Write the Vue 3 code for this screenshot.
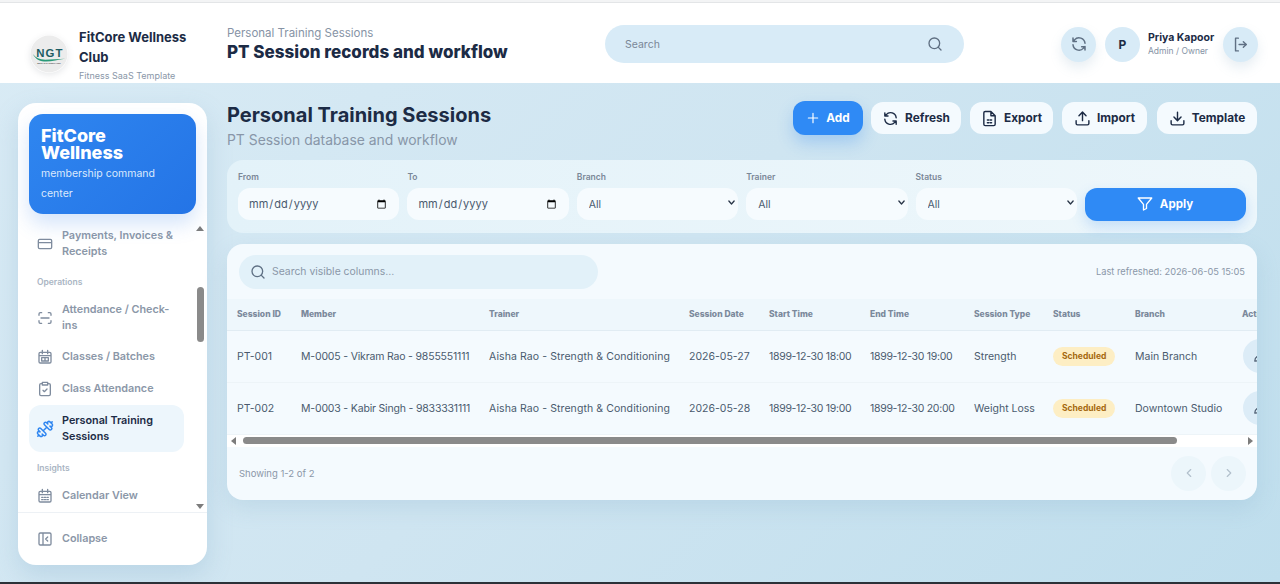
<template>
  <div class="page">
    <div class="top-strip"></div>

    <header class="topbar">
      <div class="org">
        <div class="logo">
          <svg viewBox="0 0 40 40" width="38" height="38">
            <circle cx="20" cy="20" r="19.5" fill="#ececec" />
            <text x="21" y="23" text-anchor="middle" class="logo-text">NGT</text>
            <path d="M3 20c3 4 7 6 13 6s14-1 21-1c-7 1-14 3-20 3S6 26 3 20z" fill="#2a9a78" />
            <text x="20" y="30.500" text-anchor="middle" class="logo-small">BEST SAS TEMPLATES</text>
          </svg>
        </div>
        <div class="org-text">
          <div class="org-name">FitCore Wellness Club</div>
          <div class="org-sub">Fitness SaaS Template</div>
        </div>
      </div>

      <div class="crumb">
        <div class="crumb-sub">Personal Training Sessions</div>
        <div class="crumb-title">PT Session records and workflow</div>
      </div>

      <div class="top-search">
        <span>Search</span>
        <svg class="ico" width="16" height="16" viewBox="0 0 24 24"><circle cx="11" cy="11" r="8" /><path d="m21 21-4.300-4.300" /></svg>
      </div>

      <div class="top-right">
        <button class="round-btn">
          <svg class="ico" width="18" height="18" viewBox="0 0 24 24"><path :d="icons.refresh" /></svg>
        </button>
        <div class="avatar">P</div>
        <div class="user">
          <div class="user-name">Priya Kapoor</div>
          <div class="user-role">Admin / Owner</div>
        </div>
        <button class="round-btn">
          <svg class="ico" width="17" height="17" viewBox="0 0 24 24"><path d="M9 21H5V3h4" /><path d="m16 16 4-4-4-4" /><path d="M20 12H10" /></svg>
        </button>
      </div>
    </header>

    <div class="body">
      <aside class="sidebar">
        <div class="brand">
          <div class="brand-name">FitCore Wellness</div>
          <div class="brand-sub">membership command center</div>
        </div>

        <div class="nav-wrap">
          <nav class="nav">
            <template v-for="item in navItems" :key="item.label">
              <div v-if="item.section" class="nav-section">{{ item.label }}</div>
              <a v-else class="nav-item" :class="{ active: item.active }">
                <svg class="ico nav-ico" :class="{ flip: item.active }" :width="item.active ? 18 : 16" :height="item.active ? 18 : 16" viewBox="0 0 24 24"><path :d="item.icon" /></svg>
                <span>{{ item.label }}</span>
              </a>
            </template>
          </nav>
          <div class="vscroll">
            <i class="arrow up"></i>
            <div class="vtrack"><div class="vthumb"></div></div>
            <i class="arrow down"></i>
          </div>
        </div>

        <div class="collapse">
          <svg class="ico nav-ico" width="16" height="16" viewBox="0 0 24 24"><path :d="icons.collapse" /></svg>
          <span>Collapse</span>
        </div>
      </aside>

      <main class="main">
        <div class="head">
          <div>
            <h1>Personal Training Sessions</h1>
            <p>PT Session database and workflow</p>
          </div>
          <div class="actions">
            <button class="btn primary">
              <svg class="ico" width="14" height="14" viewBox="0 0 24 24"><path d="M12 4v16M4 12h16" /></svg>
              Add
            </button>
            <button v-for="b in toolButtons" :key="b.label" class="btn" :style="{ width: b.width + 'px' }">
              <svg class="ico" width="17" height="17" viewBox="0 0 24 24"><path :d="b.icon" /></svg>
              {{ b.label }}
            </button>
          </div>
        </div>

        <section class="filters">
          <label class="field">
            <span>From</span>
            <input type="date" />
          </label>
          <label class="field">
            <span>To</span>
            <input type="date" />
          </label>
          <label v-for="f in selectFilters" :key="f" class="field sel">
            <span>{{ f }}</span>
            <select><option>All</option></select>
            <svg class="ico chev" width="9" height="9" viewBox="0 0 24 24"><path d="m5 8 7 8 7-8" /></svg>
          </label>
          <button class="apply">
            <svg class="ico funnel" width="18" height="18" viewBox="0 0 24 24"><path d="M21 4H3l7 8.500V20l4-2v-5.500z" /></svg>
            Apply
          </button>
        </section>

        <section class="table-card">
          <div class="table-top">
            <div class="table-search">
              <svg class="ico" width="16" height="16" viewBox="0 0 24 24"><circle cx="11" cy="11" r="8" /><path d="m21 21-4.300-4.300" /></svg>
              <span>Search visible columns...</span>
            </div>
            <div class="refreshed">Last refreshed: 2026-06-05 15:05</div>
          </div>

          <div class="table-wrap">
            <table>
              <colgroup>
                <col v-for="w in colWidths" :key="w.name" :style="{ width: w.px + 'px' }" />
              </colgroup>
              <thead>
                <tr><th v-for="w in colWidths" :key="w.name">{{ w.name }}</th></tr>
              </thead>
              <tbody>
                <tr v-for="r in rows" :key="r.id">
                  <td>{{ r.id }}</td>
                  <td class="tight">{{ r.member }}</td>
                  <td class="loose">{{ r.trainer }}</td>
                  <td>{{ r.date }}</td>
                  <td class="tighter">{{ r.start }}</td>
                  <td class="tighter">{{ r.end }}</td>
                  <td>{{ r.type }}</td>
                  <td><span class="pill">Scheduled</span></td>
                  <td>{{ r.branch }}</td>
                  <td>
                    <button class="row-btn">
                      <svg class="ico" width="14" height="14" viewBox="0 0 24 24"><path d="M17 3l4 4L8 20l-5 1 1-5z" /></svg>
                    </button>
                  </td>
                </tr>
              </tbody>
            </table>
          </div>

          <div class="hscroll">
            <i class="arrow left"></i>
            <div class="htrack"><div class="hthumb"></div></div>
            <i class="arrow right"></i>
          </div>

          <div class="table-foot">
            <span>Showing 1-2 of 2</span>
            <div class="pager">
              <button><svg class="ico" width="14" height="14" viewBox="0 0 24 24"><path d="m15 18-6-6 6-6" /></svg></button>
              <button><svg class="ico" width="14" height="14" viewBox="0 0 24 24"><path d="m9 18 6-6-6-6" /></svg></button>
            </div>
          </div>
        </section>
      </main>
    </div>
    <div class="bottom-strip"></div>
  </div>
</template>

<script setup>
const icons = {
  refresh: 'M20 11a8 8 0 0 0-14-4.500L4 8.500M4 4v4.500h4.500M4 13a8 8 0 0 0 14 4.500l2-2M20 20v-4.500h-4.500',
  collapse: 'M5 3h14a2 2 0 0 1 2 2v14a2 2 0 0 1-2 2H5a2 2 0 0 1-2-2V5a2 2 0 0 1 2-2zM9 3v18M16 9l-3 3 3 3',
}

const calendar = 'M5 5h14a2 2 0 0 1 2 2v12a2 2 0 0 1-2 2H5a2 2 0 0 1-2-2V7a2 2 0 0 1 2-2zM8 2v5M16 2v5M3 10h18'

const dumbbell = 'M14.400 14.400 9.600 9.600M18.657 21.485a2 2 0 1 1-2.829-2.828l-1.767 1.768a2 2 0 1 1-2.829-2.829l6.364-6.364a2 2 0 1 1 2.829 2.829l-1.768 1.767a2 2 0 1 1 2.828 2.829zM21.500 21.500l-1.400-1.400M3.900 3.900 2.500 2.500M6.404 12.768a2 2 0 1 1-2.829-2.829l1.768-1.767a2 2 0 1 1-2.828-2.829l2.828-2.828a2 2 0 1 1 2.829 2.828l1.767-1.768a2 2 0 1 1 2.829 2.829z'

const navItems = [
  { label: 'Payments, Invoices & Receipts', icon: 'M4 5h16a2 2 0 0 1 2 2v10a2 2 0 0 1-2 2H4a2 2 0 0 1-2-2V7a2 2 0 0 1 2-2zM2 10h20' },
  { label: 'Operations', section: true },
  { label: 'Attendance / Check-ins', icon: 'M3 8V6a2 2 0 0 1 2-2h2M17 4h2a2 2 0 0 1 2 2v2M21 16v2a2 2 0 0 1-2 2h-2M7 20H5a2 2 0 0 1-2-2v-2M6 12h12' },
  { label: 'Classes / Batches', icon: calendar + 'M7 13h10v5H7zM12 13v5' },
  { label: 'Class Attendance', icon: 'M8 4H6a2 2 0 0 0-2 2v14a2 2 0 0 0 2 2h12a2 2 0 0 0 2-2V6a2 2 0 0 0-2-2h-2M8 2h8v4H8zM9 14l2 2 4-4' },
  { label: 'Personal Training Sessions', active: true, icon: dumbbell },
  { label: 'Insights', section: true },
  { label: 'Calendar View', icon: calendar + 'M7 14h2M11 14h2M15 14h2M7 17.500h2M11 17.500h2M15 17.500h2' },
]

const toolButtons = [
  { label: 'Refresh', width: 90, icon: icons.refresh },
  { label: 'Export', width: 83, icon: 'M14 2H6a2 2 0 0 0-2 2v16a2 2 0 0 0 2 2h12a2 2 0 0 0 2-2V8zM14 2v6h6M9 14h2M13 14h2M9 18h2M13 18h2' },
  { label: 'Import', width: 85, icon: 'M3 15v4a2 2 0 0 0 2 2h14a2 2 0 0 0 2-2v-4M17 8l-5-5-5 5M12 3v12' },
  { label: 'Template', width: 100, icon: 'M3 15v4a2 2 0 0 0 2 2h14a2 2 0 0 0 2-2v-4M7 10l5 5 5-5M12 15V3' },
]

const selectFilters = ['Branch', 'Trainer', 'Status']

const colWidths = [
  { name: 'Session ID', px: 64 },
  { name: 'Member', px: 188 },
  { name: 'Trainer', px: 200 },
  { name: 'Session Date', px: 80 },
  { name: 'Start Time', px: 101 },
  { name: 'End Time', px: 104 },
  { name: 'Session Type', px: 79 },
  { name: 'Status', px: 82 },
  { name: 'Branch', px: 107 },
  { name: 'Actions', px: 70 },
]

const rows = [
  { id: 'PT-001', member: 'M-0005 - Vikram Rao - 9855551111', trainer: 'Aisha Rao - Strength & Conditioning', date: '2026-05-27', start: '1899-12-30 18:00', end: '1899-12-30 19:00', type: 'Strength', branch: 'Main Branch' },
  { id: 'PT-002', member: 'M-0003 - Kabir Singh - 9833331111', trainer: 'Aisha Rao - Strength & Conditioning', date: '2026-05-28', start: '1899-12-30 19:00', end: '1899-12-30 20:00', type: 'Weight Loss', branch: 'Downtown Studio' },
]
</script>

<style>
html, body { margin: 0; padding: 0; }
</style>

<style scoped>
.page {
  width: 1280px;
  height: 584px;
  overflow: hidden;
  display: flex;
  flex-direction: column;
  font-family: Inter, "Liberation Sans", sans-serif;
  color: #1c2b45;
  background: linear-gradient(135deg, #d9ebf5 0%, #cfe5f1 50%, #bfdeed 100%);
}
.ico {
  fill: none;
  stroke: currentColor;
  stroke-width: 2;
  stroke-linecap: round;
  stroke-linejoin: round;
  flex: none;
}
button { font-family: inherit; border: none; padding: 0; }

.top-strip { height: 3px; background: #f3f4f5; border-bottom: 1px solid #e3e5e7; box-sizing: border-box; flex: none; }
.bottom-strip { height: 2px; background: #2c3138; flex: none; }

/* header */
.topbar {
  height: 80px;
  flex: none;
  background: #fff;
  display: flex;
  align-items: center;
  padding-left: 30px;
  padding-right: 22px;
  box-sizing: border-box;
}
.org { width: 197px; display: flex; align-items: center; gap: 11px; flex: none; align-self: flex-start; padding-top: 24px; }
.logo { width: 38px; height: 38px; flex: none; border-radius: 50%; box-shadow: 0 2px 6px rgba(120, 130, 140, 0.18); }
.logo-text { font: 800 12px "Liberation Sans", sans-serif; fill: #1d5c63; letter-spacing: 1.200px; }
.logo-small { font: 700 2.200px "Liberation Sans", sans-serif; fill: #555; }
.org-name { font-size: 13px; font-weight: 700; line-height: 20px; color: #1c2b45; width: 118px; }
.org-sub { font-size: 9px; color: #8a97a8; line-height: 10px; margin-top: 4px; }
.crumb { width: 378px; flex: none; margin-top: 4px; }
.crumb-sub { font-size: 11.500px; color: #8693a5; line-height: 14px; }
.crumb-title { font-size: 17px; font-weight: 800; line-height: 24px; color: #1c2b45; letter-spacing: 0.020px; white-space: nowrap; }
.top-search {
  width: 359px;
  height: 38px;
  margin-top: 2px;
  border-radius: 20px;
  background: #d8ebf7;
  display: flex;
  align-items: center;
  justify-content: space-between;
  padding: 0 21px 0 20px;
  box-sizing: border-box;
  font-size: 10.500px;
  color: #7a8797;
  flex: none;
}
.top-search .ico { color: #5f6f82; }
.top-right { margin-left: auto; margin-top: 2px; display: flex; align-items: center; }
.round-btn, .avatar {
  width: 35px;
  height: 35px;
  border-radius: 50%;
  background: #d8ebf7;
  display: flex;
  align-items: center;
  justify-content: center;
  color: #5f7084;
  box-shadow: 0 6px 12px rgba(120, 160, 190, 0.18);
  flex: none;
}
.avatar { margin-left: 9px; font-size: 12px; font-weight: 700; color: #1c2b45; box-shadow: none; }
.user { margin-left: 8px; width: 75px; }
.user-name { font-size: 10.500px; font-weight: 700; color: #1c2b45; line-height: 14px; white-space: nowrap; }
.user-role { font-size: 8.500px; color: #8693a5; line-height: 13px; }

/* layout */
.body { flex: 1; display: flex; min-height: 0; padding: 20px 23px 17px 18px; gap: 20px; }

/* sidebar */
.sidebar {
  width: 189px;
  flex: none;
  background: #fff;
  border-radius: 18px;
  box-shadow: 0 10px 24px rgba(120, 165, 195, 0.25);
  display: flex;
  flex-direction: column;
  overflow: hidden;
}
.brand {
  margin: 11px 11px 0;
  height: 100px;
  flex: none;
  box-sizing: border-box;
  padding: 13px 12px;
  border-radius: 14px;
  background: linear-gradient(135deg, #2f86f0 0%, #2474e6 100%);
  color: #fff;
  box-shadow: 0 10px 20px rgba(60, 130, 230, 0.22);
  position: relative;
  z-index: 1;
}
.brand-name { font-size: 18px; font-weight: 800; line-height: 17px; width: 100px; }
.brand-sub { font-size: 10.500px; line-height: 20px; margin-top: 3px; color: #dbe9fd; width: 125px; }
.nav-wrap { flex: 1; min-height: 0; display: flex; }
.nav { flex: 1; padding: 6px 10px 0 11px; overflow: hidden; min-width: 0; }
.nav-section { font-size: 8.500px; font-weight: 600; color: #aab5c3; padding: 9px 8px 5px; line-height: 13px; }
.nav-item {
  display: flex;
  align-items: center;
  gap: 9px;
  padding: 8px 10px 8px 8px;
  min-height: 32px;
  box-sizing: border-box;
  font-size: 10.800px;
  font-weight: 600;
  line-height: 15.500px;
  color: #8b97a8;
}
.nav-item.active {
  background: #edf6fc;
  color: #1c2b45;
  border-radius: 12px;
  margin-bottom: 1px;
  gap: 8px;
  padding-left: 7px;
}
.nav-item.active .nav-ico { color: #2f86f0; }
.nav-ico { color: #7f8c9e; }
.flip { transform: scaleX(-1); }
.vscroll { width: 12px; margin-right: 1px; display: flex; flex-direction: column; align-items: center; padding-top: 12px; padding-bottom: 3px; }
.vtrack { flex: 1; padding-top: 56px; width: 7px; }
.vthumb { height: 55px; background: #8a8a8a; border-radius: 4px; }
.arrow { display: block; width: 0; height: 0; border: 4px solid transparent; flex: none; }
.arrow.up { border-top: none; border-bottom: 5px solid #7c7c7c; }
.arrow.down { border-bottom: none; border-top: 5px solid #7c7c7c; }
.arrow.left { border-left: none; border-right: 5px solid #7c7c7c; }
.arrow.right { border-right: none; border-left: 5px solid #7c7c7c; }
.collapse {
  height: 53px;
  flex: none;
  box-sizing: border-box;
  border-top: 1px solid #edf1f5;
  display: flex;
  align-items: center;
  gap: 9px;
  padding: 0 19px 1px;
  font-size: 10.800px;
  font-weight: 600;
  color: #8b97a8;
}

/* main */
.main { flex: 1; min-width: 0; display: flex; flex-direction: column; }
.head { display: flex; justify-content: space-between; align-items: flex-start; height: 57px; flex: none; }
h1 { margin: 0; font-size: 20px; font-weight: 700; line-height: 25px; color: #1c2b45; }
.head p { margin: 4px 0 0; font-size: 13.900px; line-height: 17px; color: #8896a8; }
.actions { display: flex; gap: 9px; margin-top: -1px; }
.btn {
  height: 32px;
  box-sizing: border-box;
  border-radius: 12px;
  background: #f4fafe;
  color: #1c2b45;
  font-size: 11.800px;
  font-weight: 700;
  display: flex;
  align-items: center;
  justify-content: center;
  gap: 6px;
}
.btn.primary {
  width: 70px;
  height: 34px;
  margin-top: -1px;
  margin-right: -1px;
  background: #2f8af5;
  color: #fff;
  box-shadow: 0 8px 16px rgba(50, 135, 240, 0.28);
}
.btn:last-child { margin-left: 1px; }

.filters {
  flex: none;
  height: 73px;
  box-sizing: border-box;
  background: linear-gradient(90deg, #e3f2f9, #eef7fb);
  border-radius: 16px;
  padding: 11px 11px 0;
  display: flex;
  gap: 8px;
}
.field { display: flex; flex-direction: column; width: 161.400px; position: relative; }
.field span { font-size: 8.500px; font-weight: 600; color: #7a8797; line-height: 12px; margin-bottom: 5px; }
.field input, .field select {
  height: 32px;
  box-sizing: border-box;
  width: 100%;
  border: none;
  outline: none;
  border-radius: 12px;
  background: #f6fbfe;
  font-family: inherit;
  font-size: 10.500px;
  color: #4a5a6e;
  padding: 0 10px;
}
.field input { font-size: 11px; }
.field select { appearance: none; padding-left: 12px; }
.chev { position: absolute; right: 2px; top: 27px; color: #2a3648; stroke-width: 3.500; pointer-events: none; }
.apply {
  flex: 1;
  height: 33px;
  margin-top: 17px;
  padding: 0 2px 1px 0;
  border-radius: 12px;
  background: #2f8af5;
  color: #fff;
  font-size: 11.500px;
  font-weight: 700;
  display: flex;
  align-items: center;
  justify-content: center;
  gap: 6px;
  box-shadow: 0 6px 14px rgba(50, 135, 240, 0.22);
}
.funnel { stroke-width: 1.800; }

.table-card {
  flex: none;
  height: 256px;
  margin-top: 11px;
  background: #f4fafe;
  border-radius: 16px;
  overflow: hidden;
  box-shadow: 0 8px 22px rgba(120, 165, 195, 0.2);
  display: flex;
  flex-direction: column;
}
.table-top { height: 55px; flex: none; display: flex; align-items: center; justify-content: space-between; padding: 0 12px; }
.table-search {
  width: 359px;
  height: 34px;
  border-radius: 17px;
  background: #e2f1f9;
  display: flex;
  align-items: center;
  gap: 6px;
  padding: 0 11px;
  box-sizing: border-box;
  font-size: 10.400px;
  color: #8a97a8;
}
.table-search .ico { color: #5f7084; }
.refreshed { font-size: 9.250px; color: #8a97a8; }
.table-wrap { overflow: hidden; flex: none; }
table { border-collapse: collapse; table-layout: fixed; width: 1075px; }
th {
  height: 31px;
  padding: 0 0 0 10px;
  background: #eef7fc;
  border-bottom: 1px solid #e1ecf3;
  text-align: left;
  font-size: 8.500px;
  font-weight: 800;
  color: #7b899b;
  white-space: nowrap;
  box-sizing: border-box;
  overflow: hidden;
}
td {
  height: 52px;
  padding: 0 0 0 10px;
  border-bottom: 1px solid #edf4f8;
  font-size: 10.500px;
  color: #4a5a6e;
  white-space: nowrap;
  box-sizing: border-box;
}
td.tight { letter-spacing: -0.180px; }
td.loose { letter-spacing: 0.090px; }
td.tighter { letter-spacing: -0.300px; }
.pill {
  display: inline-block;
  height: 19px;
  line-height: 18px;
  padding: 0 9px;
  border-radius: 10px;
  background: #fdeec4;
  color: #a5680f;
  font-size: 8.500px;
  font-weight: 700;
}
.row-btn {
  width: 34px;
  height: 34px;
  margin-left: 1px;
  border-radius: 50%;
  background: #dcecf7;
  color: #4a5a6e;
  display: flex;
  align-items: center;
  justify-content: center;
}
.hscroll { height: 12px; flex: none; background: #fff; display: flex; align-items: center; padding: 0 4px; }
.htrack { flex: 1; padding: 0 71px 0 7px; }
.hthumb { height: 7px; border-radius: 4px; background: #8a8a8a; }
.table-foot {
  flex: 1;
  display: flex;
  align-items: center;
  justify-content: space-between;
  padding: 0 11px 0 12px;
  font-size: 9.500px;
  color: #8a97a8;
}
.pager { display: flex; gap: 5px; }
.pager button {
  width: 35px;
  height: 35px;
  border-radius: 50%;
  background: #ecf6fb;
  color: #b2c0cc;
  display: flex;
  align-items: center;
  justify-content: center;
}
</style>
